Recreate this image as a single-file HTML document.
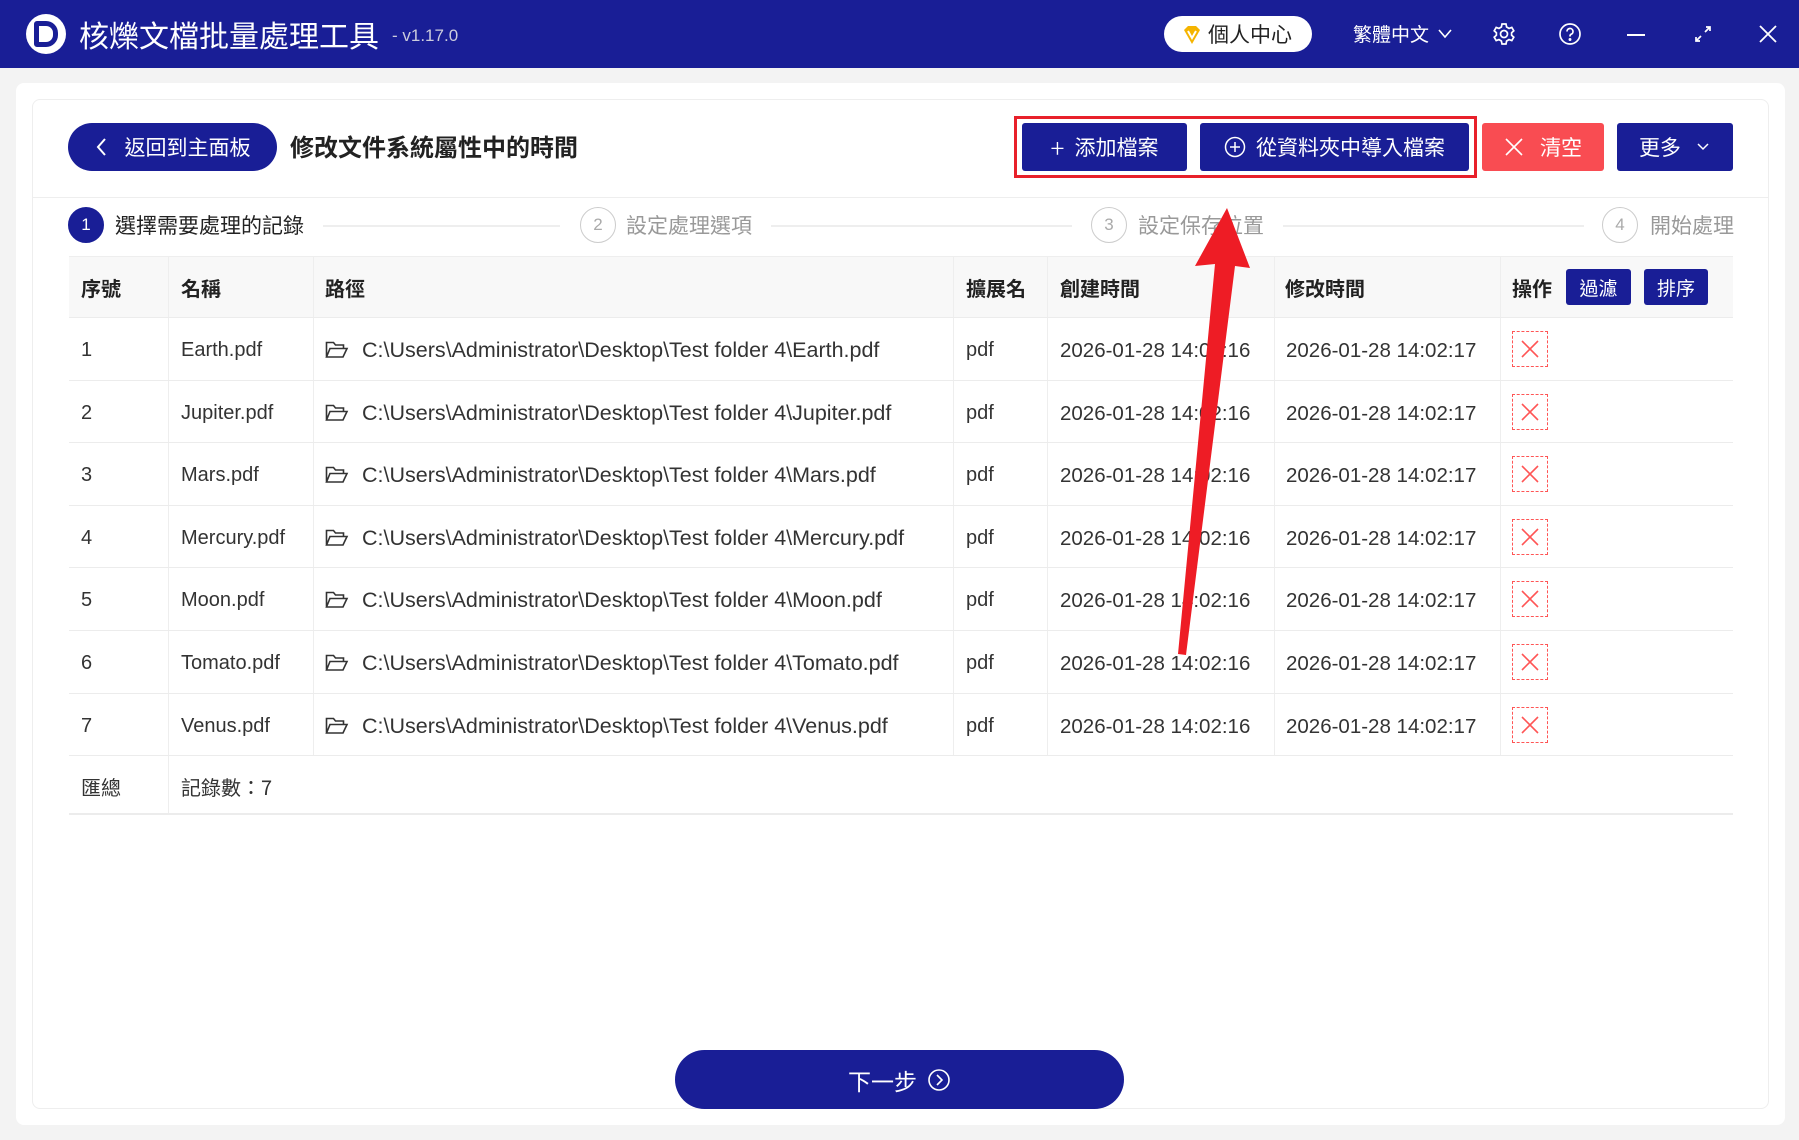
<!DOCTYPE html>
<html><head><meta charset="utf-8"><style>
*{margin:0;padding:0;box-sizing:border-box}
body{width:1799px;height:1140px;background:#f3f3f3;font-family:"Liberation Sans","Noto Sans CJK TC",sans-serif;position:relative;overflow:hidden;color:#222}
.a{position:absolute}
.top{left:0;top:0;width:1799px;height:68px;background:#191e96}
.btn{position:absolute;background:#191e96;color:#fff;font-size:21px;display:flex;align-items:center;justify-content:center;border-radius:3px}
.cj{font-family:"Noto Sans CJK TC",sans-serif}
.th{font-weight:bold;font-size:20px;color:#222}
.td{font-size:20px;color:#333}
.vl{position:absolute;width:1px;background:#eee}
.hl{position:absolute;height:1px;background:#ececec;left:69px;width:1664px}
.circ{position:absolute;width:36px;height:36px;border-radius:50%;border:1.5px solid #ccc;color:#aaa;font-size:17px;display:flex;align-items:center;justify-content:center}
.st{position:absolute;font-size:21px;color:#999;top:210px}
.line{position:absolute;height:2px;background:#eee;top:225px}
.del{position:absolute;left:1512px;width:36px;height:36px;border:1px dashed #f55;display:flex;align-items:center;justify-content:center}
</style></head><body>
<div class="a top"></div>
<div class="a" style="left:26px;top:14px;width:40px;height:40px;border-radius:50%;background:#fff"></div>
<div class="a" style="left:34px;top:21px;width:24px;height:26px;border:5px solid #191e96;border-radius:3px 12px 12px 3px"></div>
<div class="a cj" style="left:79px;top:14px;font-size:30px;color:#fff;line-height:40px">核爍文檔批量處理工具</div>
<div class="a" style="left:392px;top:26px;font-size:17px;color:#ccd">- v1.17.0</div>
<div class="a" style="left:1164px;top:16px;width:148px;height:36px;border-radius:18px;background:#fff"></div>
<svg class="a" style="left:1181px;top:24px" width="22" height="22" viewBox="0 0 22 22"><path d="M3 6 L7 2 H15 L19 6 L11 20 Z" fill="#f5b400"/><path d="M7 7 L11 14 L15 7" stroke="#fff" stroke-width="2" fill="none"/></svg>
<div class="a cj" style="left:1208px;top:19px;font-size:21px;color:#222;line-height:30px">個人中心</div>
<div class="a cj" style="left:1353px;top:20px;font-size:19px;color:#fff;line-height:28px">繁體中文</div>
<svg class="a" style="left:1437px;top:28px" width="16" height="12"><path d="M2 2 L8 9 L14 2" stroke="#fff" stroke-width="1.6" fill="none"/></svg>
<svg class="a" style="left:1492px;top:22px" width="24" height="24" viewBox="0 0 24 24" fill="none" stroke="#fff" stroke-width="1.7"><circle cx="12" cy="12" r="3.5"/><path d="M10 2h4l.6 3 2.4 1.4 2.8-1 2 3.4-2.2 2v2.4l2.2 2-2 3.4-2.8-1L14.6 19l-.6 3h-4l-.6-3-2.4-1.4-2.8 1-2-3.4 2.2-2v-2.4l-2.2-2 2-3.4 2.8 1L9.4 5z"/></svg>
<svg class="a" style="left:1558px;top:22px" width="24" height="24" viewBox="0 0 24 24" fill="none" stroke="#fff" stroke-width="1.7"><circle cx="12" cy="12" r="10"/><path d="M9 9.5a3 3 0 1 1 4 2.8c-1 .4-1 1-1 2.2"/><circle cx="12" cy="17.5" r=".6" fill="#fff"/></svg>
<div class="a" style="left:1627px;top:34px;width:18px;height:2px;background:#fff"></div>
<svg class="a" style="left:1693px;top:24px" width="20" height="20" fill="none" stroke="#fff" stroke-width="1.7"><path d="M12 8 L17 3 M13 3h4v4 M8 12 L3 17 M3 13v4h4"/></svg>
<svg class="a" style="left:1757px;top:23px" width="22" height="22" stroke="#fff" stroke-width="1.8"><path d="M3 3L19 19M19 3L3 19"/></svg>

<div class="a" style="left:16px;top:83px;width:1769px;height:1042px;background:#fff;border-radius:8px"></div>
<div class="a" style="left:32px;top:99px;width:1737px;height:1010px;background:#fff;border:1px solid #eee;border-radius:8px"></div>

<div class="btn cj" style="left:68px;top:123px;width:209px;height:48px;border-radius:24px;font-size:21px"><svg width="14" height="20" style="margin-right:16px"><path d="M10 2 L3 10 L10 18" stroke="#fff" stroke-width="2" fill="none"/></svg>返回到主面板</div>
<div class="a cj" style="left:290px;top:129px;font-size:24px;font-weight:bold;color:#222;line-height:34px">修改文件系統屬性中的時間</div>

<div class="a" style="left:1014px;top:116px;width:463px;height:62px;border:3px solid #e8202a"></div>
<div class="btn cj" style="left:1022px;top:123px;width:165px;height:48px"><span style="font-size:26px;font-weight:300;margin-right:10px">+</span>添加檔案</div>
<div class="btn cj" style="left:1200px;top:123px;width:269px;height:48px"><svg width="22" height="22" style="margin-right:10px" fill="none" stroke="#fff" stroke-width="1.5"><circle cx="11" cy="11" r="9.5"/><path d="M11 6v10M6 11h10"/></svg>從資料夾中導入檔案</div>
<div class="btn cj" style="left:1482px;top:123px;width:122px;height:48px;background:#f94c52"><svg width="20" height="20" style="margin-right:16px" stroke="#fff" stroke-width="1.6"><path d="M2 2L18 18M18 2L2 18"/></svg>清空</div>
<div class="btn cj" style="left:1617px;top:123px;width:116px;height:48px">更多<svg width="16" height="12" style="margin-left:14px"><path d="M3 3 L8 8 L13 3" stroke="#fff" stroke-width="1.5" fill="none"/></svg></div>

<div class="a" style="left:32px;top:197px;width:1737px;height:1px;background:#eee"></div>
<div class="circ" style="left:68px;top:207px;background:#191e96;border-color:#191e96;color:#fff">1</div>
<div class="st cj" style="left:115px;color:#222">選擇需要處理的記錄</div>
<div class="line" style="left:323px;width:237px"></div>
<div class="circ" style="left:580px;top:207px">2</div>
<div class="st cj" style="left:626px">設定處理選項</div>
<div class="line" style="left:771px;width:301px"></div>
<div class="circ" style="left:1091px;top:207px">3</div>
<div class="st cj" style="left:1138px">設定保存位置</div>
<div class="line" style="left:1283px;width:301px"></div>
<div class="circ" style="left:1602px;top:207px">4</div>
<div class="st cj" style="left:1650px">開始處理</div>

<div class="a" style="left:69px;top:256px;width:1664px;height:61px;background:#f8f8f8;border-top:1px solid #eee"></div>
<div class="vl" style="left:168px;top:256px;height:499px"></div>
<div class="vl" style="left:168px;top:755px;height:58px"></div>
<div class="vl" style="left:313px;top:256px;height:499px"></div>
<div class="vl" style="left:953px;top:256px;height:499px"></div>
<div class="vl" style="left:1047px;top:256px;height:499px"></div>
<div class="vl" style="left:1274px;top:256px;height:499px"></div>
<div class="vl" style="left:1500px;top:256px;height:499px"></div>
<div class="a th cj" style="left:81px;top:273px">序號</div>
<div class="a th cj" style="left:181px;top:273px">名稱</div>
<div class="a th cj" style="left:325px;top:273px">路徑</div>
<div class="a th cj" style="left:966px;top:273px">擴展名</div>
<div class="a th cj" style="left:1060px;top:273px">創建時間</div>
<div class="a th cj" style="left:1285px;top:273px">修改時間</div>
<div class="a th cj" style="left:1512px;top:273px">操作</div>
<div class="btn cj" style="left:1566px;top:269px;width:65px;height:36px;font-size:19px">過濾</div>
<div class="btn cj" style="left:1644px;top:269px;width:64px;height:36px;font-size:19px">排序</div>

<div id="rows"></div>
<script>
var n=["Earth","Jupiter","Mars","Mercury","Moon","Tomato","Venus"],h="";
for(var i=0;i<7;i++){var y=317+i*62.6;
h+='<div class="hl" style="top:'+y+'px"></div>';
var t=y+22;
h+='<div class="a td" style="left:81px;top:'+t+'px">'+(i+1)+'</div>';
h+='<div class="a td" style="left:181px;top:'+t+'px">'+n[i]+'.pdf</div>';
h+='<svg class="a" style="left:325px;top:'+(t+1)+'px" width="24" height="20" fill="none" stroke="#333" stroke-width="1.6"><path d="M1.5 17V2.5h7l2 2.5h8v3.5M1.5 17l3.5-8.5h17L18 17z"/></svg>';
h+='<div class="a td" style="left:362px;top:'+(t-1)+'px;font-size:21.5px">C:\\Users\\Administrator\\Desktop\\Test folder 4\\'+n[i]+'.pdf</div>';
h+='<div class="a td" style="left:966px;top:'+t+'px">pdf</div>';
h+='<div class="a td" style="left:1060px;top:'+t+'px;font-size:20.5px">2026-01-28 14:02:16</div>';
h+='<div class="a td" style="left:1286px;top:'+t+'px;font-size:20.5px">2026-01-28 14:02:17</div>';
h+='<div class="del" style="top:'+(y+14)+'px"><svg width="20" height="20" stroke="#f55" stroke-width="1.6"><path d="M2 2L18 18M18 2L2 18"/></svg></div>';}
h+='<div class="hl" style="top:755px"></div><div class="hl" style="top:813px;height:2px"></div>';
document.getElementById("rows").innerHTML=h;
</script>
<div class="a td cj" style="left:81px;top:772px">匯總</div>
<div class="a td cj" style="left:181px;top:772px">記錄數：7</div>

<div class="btn cj" style="left:675px;top:1050px;width:449px;height:59px;border-radius:30px;font-size:23px">下一步<svg width="24" height="24" style="margin-left:10px" fill="none" stroke="#fff" stroke-width="1.6"><circle cx="12" cy="12" r="10"/><path d="M10 7l5 5-5 5"/></svg></div>

<svg class="a" style="left:0;top:0" width="1799" height="1140"><polygon points="1227,208 1250,268 1235,266 1186,655 1178,654 1215,264 1195,266" fill="#ee1c25"/></svg>
</body></html>
